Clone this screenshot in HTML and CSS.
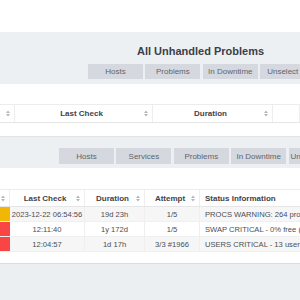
FILE: index.html
```html
<!DOCTYPE html>
<html lang="en">
<head>
    <meta charset="UTF-8">
    <title>All Unhandled Problems</title>
    <link rel="stylesheet" href="styles.css">
</head>
<body>

    <div class="card card-stub"></div>

    <div class="panel panel-main">
        <h1>All Unhandled Problems</h1>
        <div class="nav nav-main">
            <button>Hosts</button>
            <button>Problems</button>
            <button>In Downtime</button>
            <button class="last">Unselect</button>
        </div>
    </div>

    <div class="card card-hosts">
        <div class="thead hosts-cols">
            <div class="th"><span class="sp"></span><span></span><svg class="sort" width="4" height="7" viewBox="0 0 4 7"><path d="M0 3L2 0.5L4 3ZM0 4L2 6.5L4 4Z"/></svg></div>
            <div class="th"><span class="sp"></span><span>Last Check</span><svg class="sort" width="4" height="7" viewBox="0 0 4 7"><path d="M0 3L2 0.5L4 3ZM0 4L2 6.5L4 4Z"/></svg></div>
            <div class="th"><span class="sp"></span><span>Duration</span><svg class="sort" width="4" height="7" viewBox="0 0 4 7"><path d="M0 3L2 0.5L4 3ZM0 4L2 6.5L4 4Z"/></svg></div>
            <div class="th"></div>
        </div>
    </div>

    <div class="panel panel-sub">
        <div class="nav nav-sub">
            <button>Hosts</button>
            <button>Services</button>
            <button>Problems</button>
            <button>In Downtime</button>
            <button class="last">Unselect</button>
        </div>
    </div>

    <div class="card card-services">
        <div class="thead svc-cols">
            <div class="th th-state"><svg class="sort" width="4" height="7" viewBox="0 0 4 7"><path d="M0 3L2 0.5L4 3ZM0 4L2 6.5L4 4Z"/></svg></div>
            <div class="th"><span class="sp"></span><span>Last Check</span><svg class="sort" width="4" height="7" viewBox="0 0 4 7"><path d="M0 3L2 0.5L4 3ZM0 4L2 6.5L4 4Z"/></svg></div>
            <div class="th"><span class="sp"></span><span>Duration</span><svg class="sort" width="4" height="7" viewBox="0 0 4 7"><path d="M0 3L2 0.5L4 3ZM0 4L2 6.5L4 4Z"/></svg></div>
            <div class="th"><span class="sp"></span><span>Attempt</span><svg class="sort" width="4" height="7" viewBox="0 0 4 7"><path d="M0 3L2 0.5L4 3ZM0 4L2 6.5L4 4Z"/></svg></div>
            <div class="th th-left">Status Information</div>
        </div>
        <div class="row svc-cols odd">
            <div class="td state warning"></div>
            <div class="td">2023-12-22 06:54:56</div>
            <div class="td">19d 23h</div>
            <div class="td">1/5</div>
            <div class="td td-left">PROCS WARNING: 264 processes</div>
        </div>
        <div class="row svc-cols">
            <div class="td state critical"></div>
            <div class="td">12:11:40</div>
            <div class="td">1y 172d</div>
            <div class="td">1/5</div>
            <div class="td td-left">SWAP CRITICAL - 0% free (0 MB out of 0 MB)</div>
        </div>
        <div class="row svc-cols odd">
            <div class="td state critical"></div>
            <div class="td">12:04:57</div>
            <div class="td">1d 17h</div>
            <div class="td">3/3 #1966</div>
            <div class="td td-left">USERS CRITICAL - 13 users currently logged in</div>
        </div>
    </div>

</body>
</html>
```

FILE: styles.css
```css
body {
    font-family: "Liberation Sans", Arial, sans-serif;
    margin: 0;
    background-color: #eceff2;
    color: #444;
    overflow: hidden;
    white-space: nowrap;
}
.card {
    background-color: #fff;
}
.card-stub {
    height: 32px;
}
.panel {
    background-color: #edf0f3;
}
.panel-main {
    height: 52px;
    box-sizing: border-box;
    padding-top: 12px;
}
.panel-main h1 {
    margin: 0 0 6px 137px;
    font-size: 11px;
    line-height: 14px;
    color: #3b4046;
}
.nav {
    display: flex;
    gap: 2.4px;
}
.nav button {
    flex-shrink: 0;
    width: 55px;
    height: 15px;
    padding: 0;
    border: none;
    background-color: #d5d9df;
    color: #5f646b;
    font-family: inherit;
    font-size: 8px;
}
.nav-main .last {
    width: 50px;
    text-align: left;
    padding-left: 7px;
}
.nav-main {
    padding-left: 88px;
}
.panel-sub {
    height: 32px;
    box-sizing: border-box;
    padding-top: 11px;
    border-top: 1px solid #e2e5e8;
}
.nav-sub {
    padding-left: 59px;
}
.nav-sub button {
    height: 16px;
}
.nav-sub .last {
    text-align: left;
    padding-left: 2px;
}
.card-hosts {
    height: 52px;
    box-sizing: border-box;
    padding-top: 20px;
}
.card-services {
    height: 96px;
    box-sizing: border-box;
    padding-top: 21px;
    border-bottom: 1px solid #d9dde1;
}
.thead, .row {
    display: grid;
}
.hosts-cols {
    grid-template-columns: 15px 138px 120px 1fr;
}
.svc-cols {
    grid-template-columns: 10px 75px 60px 55px 1fr;
}
.thead {
    border-top: 1px solid #ececec;
    border-bottom: 1px solid #e6e6e6;
}
.hosts-cols.thead {
    height: 17px;
}
.svc-cols.thead {
    height: 16px;
}
.th {
    display: flex;
    align-items: center;
    justify-content: space-between;
    padding: 0 4px 0 0;
    border-right: 1px solid #eeeeee;
    font-size: 8px;
    font-weight: bold;
    color: #3f4348;
}
.th .sp {
    width: 4px;
}
.th-state {
    justify-content: flex-start;
    padding: 0 0 0 1px;
}
.th-left {
    justify-content: flex-start;
    padding-left: 5px;
    border-right: none;
}
.sort {
    fill: #b4b8bc;
}
.row {
    height: 15px;
    border-bottom: 1px solid #f0f0f0;
    box-sizing: border-box;
}
.row.odd {
    background-color: #f6f6f6;
}
.td {
    display: flex;
    align-items: center;
    justify-content: center;
    overflow: hidden;
    border-right: 1px solid #efefef;
    font-size: 7.6px;
    color: #4a4e53;
}
.td-left {
    justify-content: flex-start;
    padding-left: 5px;
    border-right: none;
}
.state {
    border-right: none;
}
.warning {
    background-color: #f2b705;
}
.critical {
    background-color: #fa4545;
}
```
